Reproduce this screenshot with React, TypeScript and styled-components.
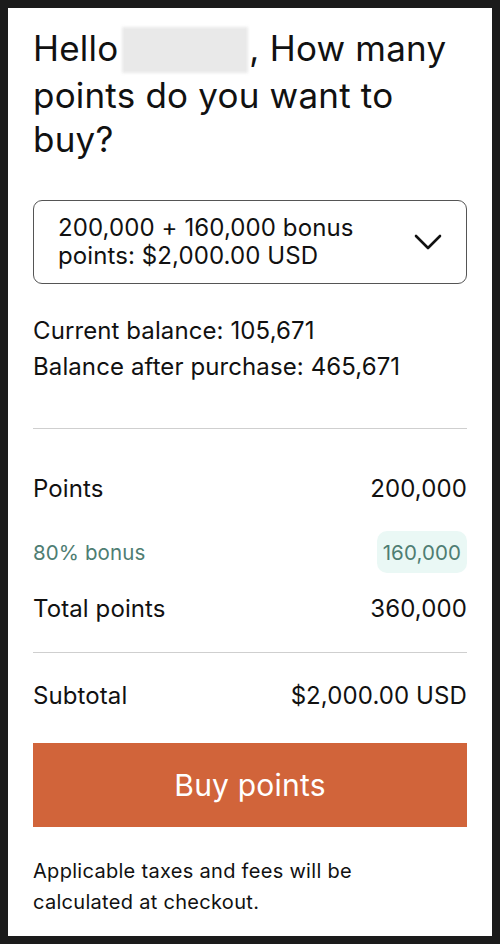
import React from "react"
import styled, { createGlobalStyle } from "styled-components"

const GlobalStyle = createGlobalStyle`
  html, body {
    margin: 0;
    padding: 0;
    background: #1b1b1b;
  }
  body {
    padding: 8px;
    font-family: Inter, "Noto Sans", sans-serif;
    color: #111;
  }
`

const Panel = styled.div`
  box-sizing: border-box;
  width: 484px;
  height: 928px;
  background: #fff;
  padding: 18px 25px 0 25px;
  overflow: hidden;
`

const Title = styled.h1`
  margin: 0;
  font-size: 35px;
  line-height: 44px;
  font-weight: 400;
  letter-spacing: 0.2px;
  color: #111;
`

const Blurred = styled.span`
  display: inline-block;
  width: 126px;
  height: 46px;
  vertical-align: -12px;
  margin: 0 1px 0 4px;
  background: #e9e9e9;
  filter: blur(1.5px);
`

const Select = styled.div`
  margin-top: 39px;
  height: 84px;
  box-sizing: border-box;
  border: 1px solid #555;
  border-radius: 9px;
  display: flex;
  align-items: center;
  justify-content: space-between;
  padding: 0 24px 0 24px;
`

const SelectText = styled.div`
  font-size: 24px;
  line-height: 28px;
  letter-spacing: 0.1px;
`

const Balance = styled.div`
  margin-top: 29px;
  font-size: 24px;
  line-height: 36px;
  letter-spacing: 0.1px;
`

const Divider = styled.hr<{ $top: number }>`
  border: none;
  border-top: 1px solid #cfcfcf;
  margin: ${(p) => p.$top}px 0 0 0;
`

const Rows = styled.div`
  display: flex;
  flex-direction: column;
  padding-top: 38px;
`

const Row = styled.div<{ $top?: number }>`
  display: flex;
  align-items: center;
  justify-content: space-between;
  height: 42px;
  margin-top: ${(p) => p.$top ?? 0}px;
  font-size: 24px;
  letter-spacing: 0.1px;
`

const BonusLabel = styled.span`
  font-size: 20.5px;
  color: #4e7d72;
`

const BonusBadge = styled.span`
  font-size: 20.5px;
  color: #4e7d72;
  background: #eaf8f5;
  border-radius: 10px;
  padding: 0 6px;
  height: 42px;
  display: flex;
  align-items: center;
`

const BuyButton = styled.button`
  display: block;
  width: 100%;
  height: 84px;
  margin-top: 27px;
  border: none;
  background: #d1643a;
  color: #fff;
  font-family: inherit;
  font-size: 30px;
  letter-spacing: 0.2px;
  cursor: pointer;
`

const Note = styled.p`
  margin: 29px 0 0 0;
  max-width: 370px;
  font-size: 20px;
  line-height: 31px;
  letter-spacing: 0.3px;
`

function Chevron(): JSX.Element {
  return (
    <svg width="28" height="18" viewBox="0 0 28 18" fill="none">
      <polyline
        points="2,3 14,15 26,3"
        stroke="#111"
        strokeWidth="2.6"
        strokeLinecap="round"
        strokeLinejoin="round"
      />
    </svg>
  )
}

export default function App(): JSX.Element {
  return (
    <>
      <GlobalStyle />
      <Panel>
        <Title>
          Hello<Blurred />, How many points do you want to buy?
        </Title>
        <Select>
          <SelectText>
            200,000 + 160,000 bonus
            <br />
            points: $2,000.00 USD
          </SelectText>
          <Chevron />
        </Select>
        <Balance>
          Current balance: 105,671
          <br />
          Balance after purchase: 465,671
        </Balance>
        <Divider $top={43} />
        <Rows>
          <Row>
            <span>Points</span>
            <span>200,000</span>
          </Row>
          <Row $top={22}>
            <BonusLabel>80% bonus</BonusLabel>
            <BonusBadge>160,000</BonusBadge>
          </Row>
          <Row $top={14}>
            <span>Total points</span>
            <span>360,000</span>
          </Row>
        </Rows>
        <Divider $top={23} />
        <Row $top={21}>
          <span>Subtotal</span>
          <span>$2,000.00 USD</span>
        </Row>
        <BuyButton>Buy points</BuyButton>
        <Note>Applicable taxes and fees will be calculated at checkout.</Note>
      </Panel>
    </>
  )
}
